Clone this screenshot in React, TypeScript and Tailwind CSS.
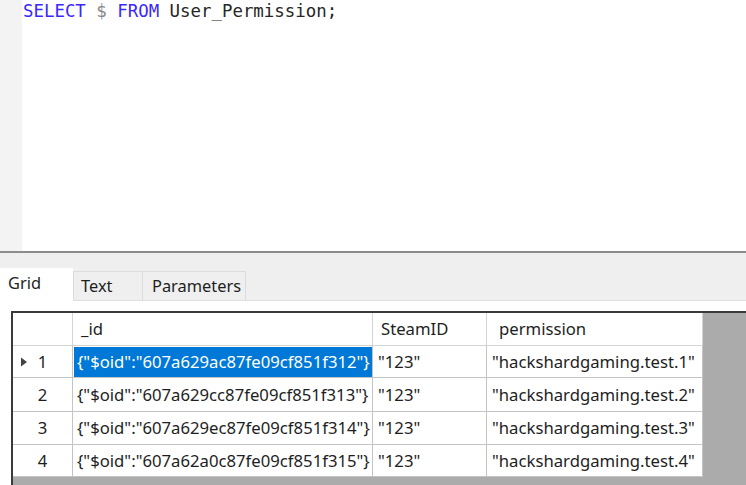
const columns = [
  { key: 'id', label: '_id', width: 'w-[300px]', headPad: 'pl-[8px]', cellPad: 'pl-[4px]' },
  { key: 'steam', label: 'SteamID', width: 'w-[114px]', headPad: 'pl-[8px]', cellPad: 'pl-[5px]' },
  { key: 'perm', label: 'permission', width: 'w-[216px]', headPad: 'pl-[12px]', cellPad: 'pl-[5px]' },
] as const;

const rows = [
  { id: '{"$oid":"607a629ac87fe09cf851f312"}', steam: '"123"', perm: '"hackshardgaming.test.1"', h: 'h-[32px]' },
  { id: '{"$oid":"607a629cc87fe09cf851f313"}', steam: '"123"', perm: '"hackshardgaming.test.2"', h: 'h-[34px]' },
  { id: '{"$oid":"607a629ec87fe09cf851f314"}', steam: '"123"', perm: '"hackshardgaming.test.3"', h: 'h-[33px]' },
  { id: '{"$oid":"607a62a0c87fe09cf851f315"}', steam: '"123"', perm: '"hackshardgaming.test.4"', h: 'h-[32px]' },
];

function Tab({ label, active, className }: { label: string; active?: boolean; className: string }) {
  if (active) {
    return (
      <div className={`${className} h-[33px] -mb-px bg-white flex items-center pl-[8px] pb-[3px] text-[#1e1e1e]`}>
        {label}
      </div>
    );
  }
  return (
    <div
      className={`${className} h-[29px] bg-[#efefef] border border-b-0 border-[#dcdcdc] flex items-center text-[#1e1e1e]`}
    >
      {label}
    </div>
  );
}

export default function App() {
  return (
    <div className="w-[746px] h-[485px] overflow-hidden flex flex-col bg-white font-['Noto_Sans',sans-serif] text-[16.7px]">
      {/* query editor */}
      <div className="h-[251px] flex">
        <div className="w-[22px] bg-[#f3f3f3]" />
        <div className="flex-1 pl-px pt-[1px] font-['DejaVu_Sans_Mono',monospace] text-[17.4px] leading-[20px] whitespace-pre">
          <span className="text-[#3a28ff]">SELECT</span>
          <span className="text-[#8a8a8a]"> $ </span>
          <span className="text-[#3a28ff]">FROM</span>
          <span className="text-[#262626]"> User_Permission;</span>
        </div>
      </div>

      {/* splitter */}
      <div className="h-[2px] bg-[#8c8c8c]" />

      {/* tab strip */}
      <div className="h-[48px] bg-[#efefef] border-b border-[#dedede] flex items-end text-[16.4px]">
        <Tab label="Grid" active className="w-[73px]" />
        <Tab label="Text" className="w-[70px] pl-[7px]" />
        <Tab label="Parameters" className="w-[104px] pl-[9px] -ml-px" />
      </div>

      {/* result grid */}
      <div className="flex-1 pt-[10px] pl-[11px] flex flex-col min-h-0">
        <div className="flex-1 border-l-2 border-t-2 border-[#3a3a3a] bg-[#ababab] flex flex-col">
          <div className="flex h-[33px]">
            <div className="w-[60px] bg-white border-r border-b border-[#d4d4d4]" />
            {columns.map((c) => (
              <div
                key={c.key}
                className={`${c.width} ${c.headPad} bg-white border-r border-b border-[#d4d4d4] flex items-center text-[#1e1e1e]`}
              >
                {c.label}
              </div>
            ))}
          </div>
          {rows.map((r, i) => (
            <div key={i} className={`flex ${r.h}`}>
              <div className="w-[60px] bg-white border-r border-b border-[#c4c4c4] flex items-center justify-center text-[#1e1e1e] relative">
                {i === 0 && (
                  <svg className="absolute left-[8px] top-1/2 -translate-y-1/2" width="6" height="10" viewBox="0 0 6 10">
                    <path d="M0 0.5 L6 5 L0 9.5 Z" fill="#444" />
                  </svg>
                )}
                <span>{i + 1}</span>
              </div>
              {columns.map((c) => {
                const selected = i === 0 && c.key === 'id';
                return (
                  <div
                    key={c.key}
                    className={`${c.width} border-r border-b border-[#c4c4c4] flex items-center whitespace-nowrap overflow-hidden bg-white ${
                      selected ? 'pl-px pt-px' : `${c.cellPad} text-[#1e1e1e]`
                    }`}
                  >
                    {selected ? (
                      <div className="w-full h-full bg-[#0078d7] text-white flex items-center pl-[3px]">{r.id}</div>
                    ) : (
                      r[c.key]
                    )}
                  </div>
                );
              })}
            </div>
          ))}
        </div>
      </div>
    </div>
  );
}
